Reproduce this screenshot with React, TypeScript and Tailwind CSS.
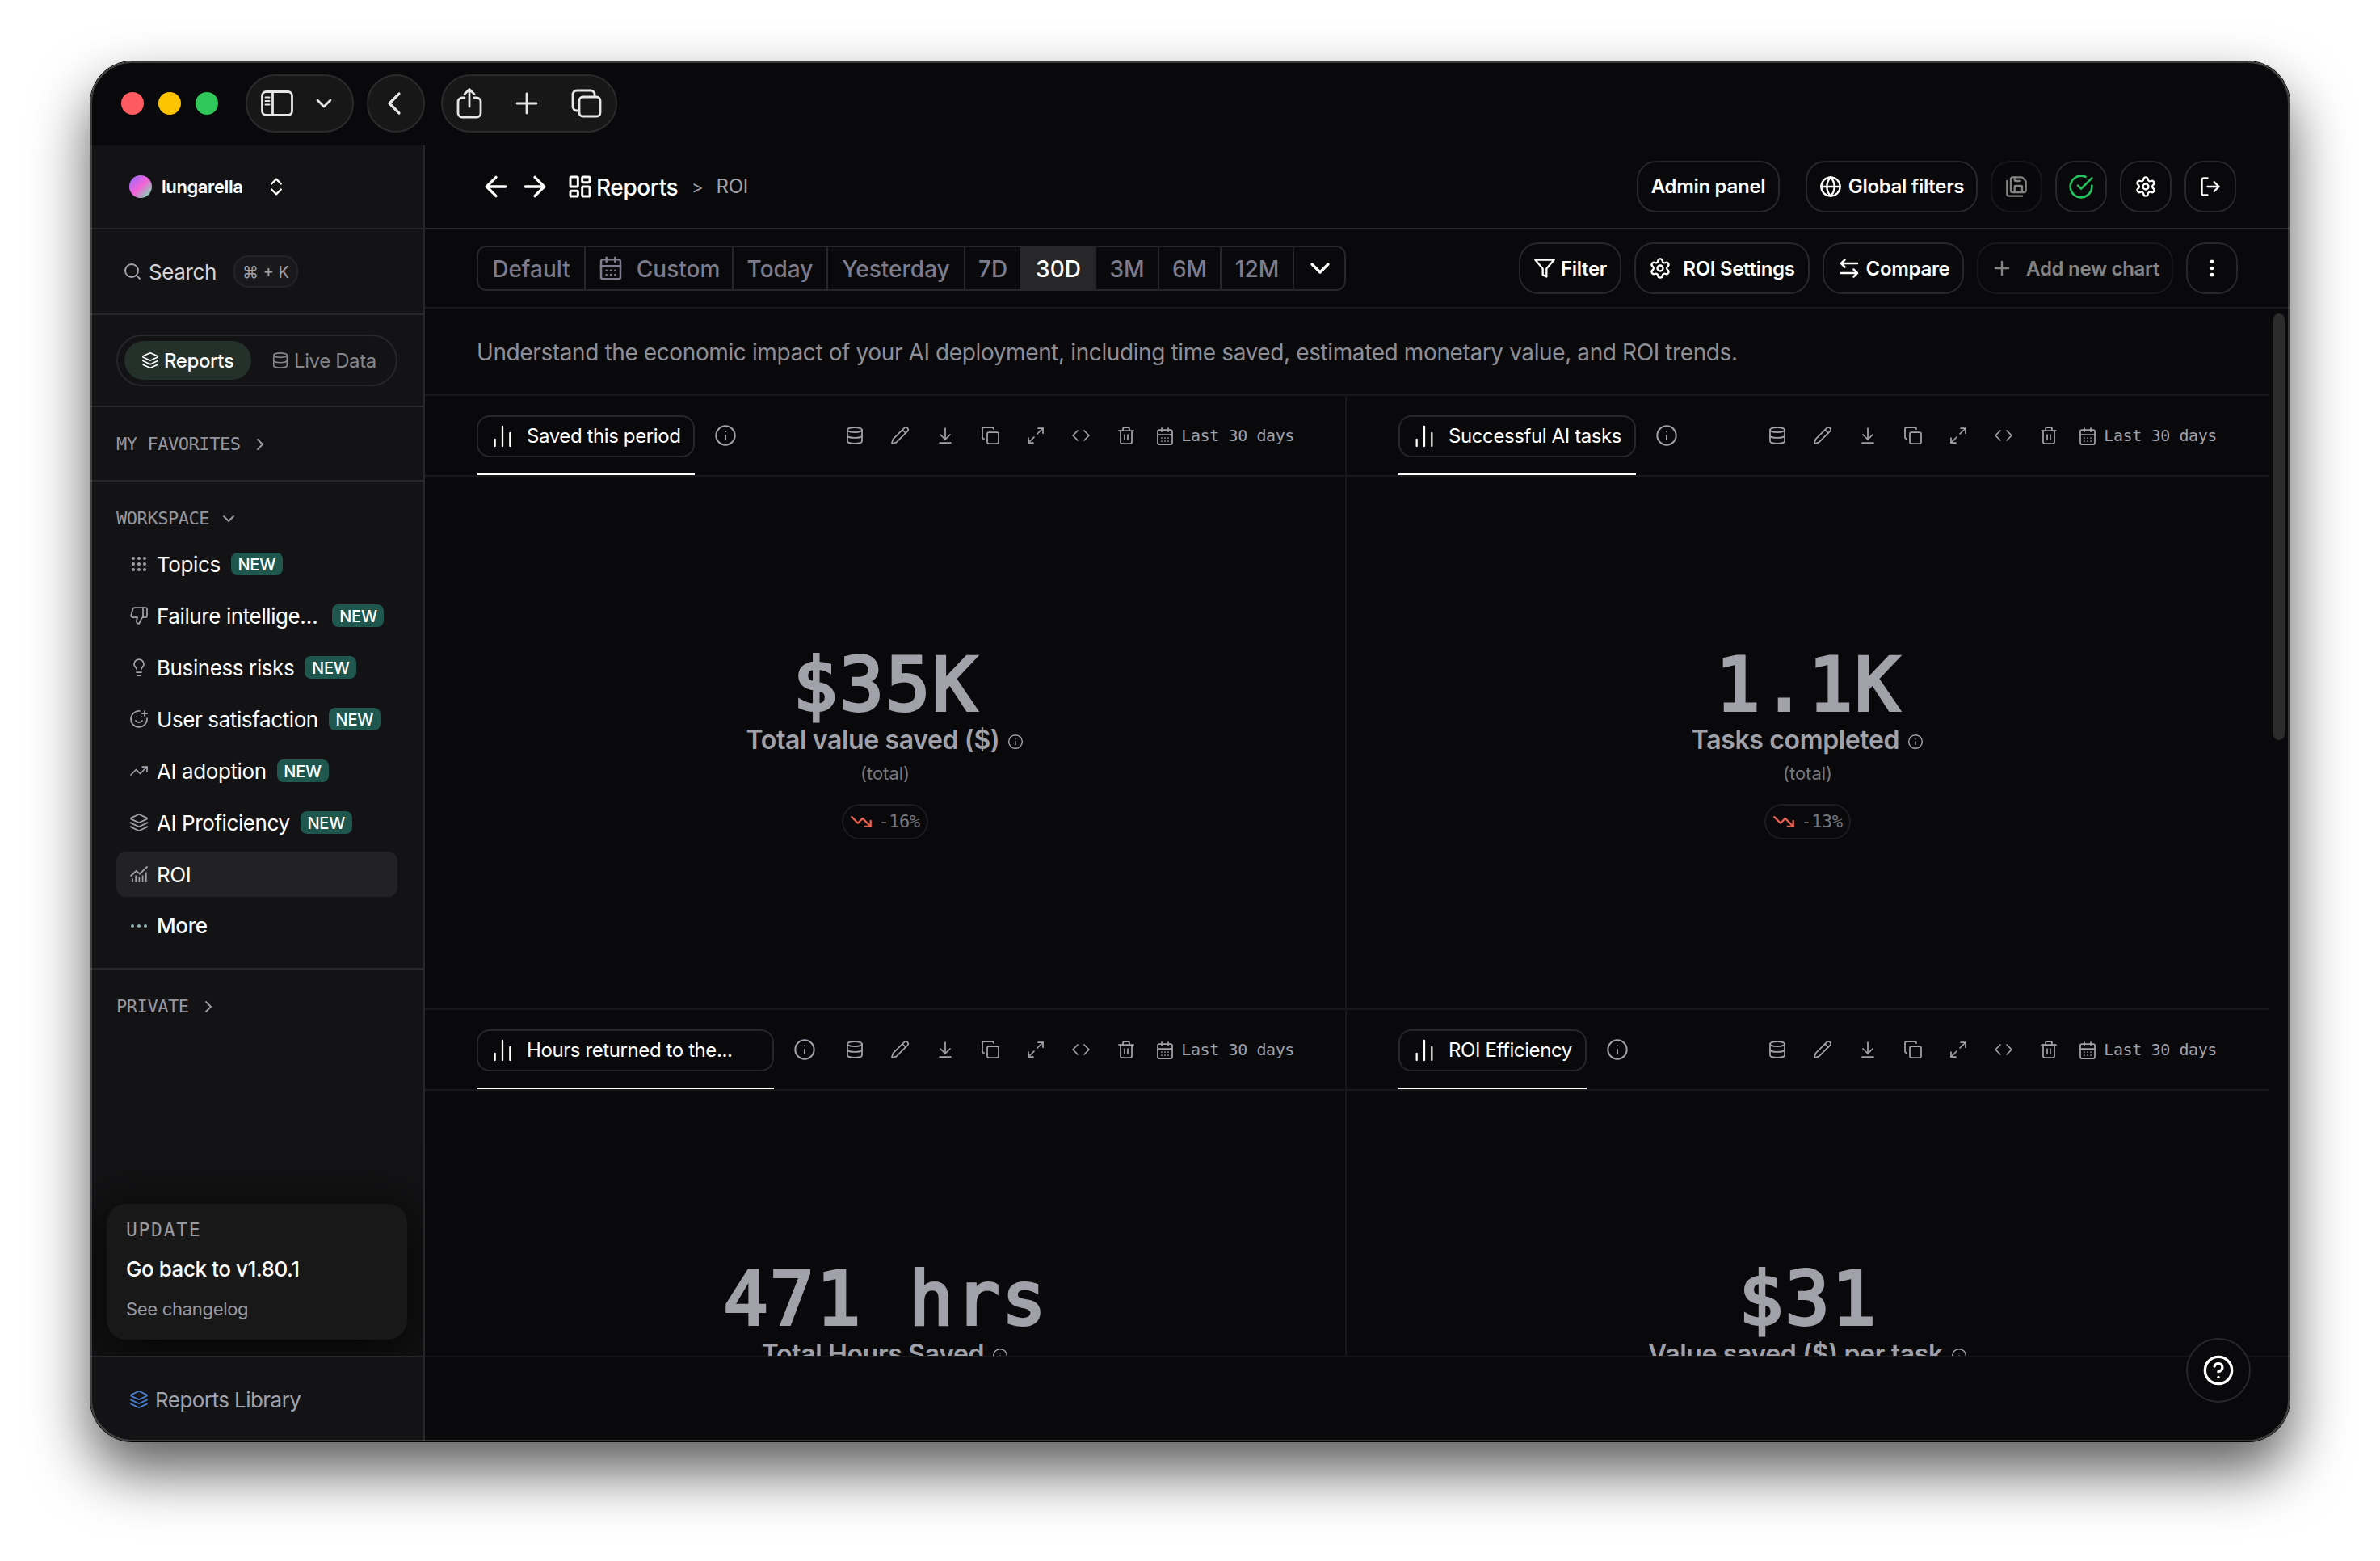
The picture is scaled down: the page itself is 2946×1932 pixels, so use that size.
import type { ReactNode } from "react"
import {
  ArrowDownToLine,
  ArrowLeft,
  ArrowRight,
  CalendarDays,
  ChartNoAxesColumn,
  ChevronDown,
  ChevronRight,
  ChevronsUpDown,
  CircleHelp,
  Code,
  Copy,
  Database,
  EllipsisVertical,
  Globe,
  Grip,
  Info,
  Layers,
  LayoutDashboard,
  Lightbulb,
  LogOut,
  Maximize2,
  Pencil,
  Plus,
  SaveAll,
  Search,
  Settings,
  SmilePlus,
  ThumbsDown,
  Trash2,
  TrendingDown,
  TrendingUp,
} from "lucide-react"

const navItems = [
  { label: "Topics", icon: <Grip size={24} strokeWidth={2} />, isNew: true },
  { label: "Failure intellige…", icon: <ThumbsDown size={24} strokeWidth={1.75} />, isNew: true, wide: true },
  { label: "Business risks", icon: <Lightbulb size={24} strokeWidth={1.75} />, isNew: true },
  { label: "User satisfaction", icon: <SmilePlus size={24} strokeWidth={1.75} />, isNew: true },
  { label: "AI adoption", icon: <TrendingUp size={24} strokeWidth={1.75} />, isNew: true },
  { label: "AI Proficiency", icon: <Layers size={24} strokeWidth={1.75} />, isNew: true },
  { label: "ROI", icon: <TrendBars />, active: true },
]

const ranges = [
  { label: "Default", width: "w-[133px]" },
  { label: "Custom", width: "w-[183px]", calendar: true },
  { label: "Today", width: "w-[117px]" },
  { label: "Yesterday", width: "w-[170px]" },
  { label: "7D", width: "w-[70px]" },
  { label: "30D", width: "w-[92px]", active: true },
  { label: "3M", width: "w-[78px]" },
  { label: "6M", width: "w-[77px]" },
  { label: "12M", width: "w-[90px]" },
]

const charts = [
  { title: "Saved this period", width: "w-[270px]", value: "$35K", label: "Total value saved ($)", change: "-16%" },
  { title: "Successful AI tasks", width: "w-[294px]", value: "1.1K", label: "Tasks completed", change: "-13%" },
  { title: "Hours returned to the...", width: "w-[368px]", value: "471 hrs", label: "Total Hours Saved" },
  { title: "ROI Efficiency", width: "w-[233px]", value: "$31", label: "Value saved ($) per task" },
]

function TrendBars() {
  return (
    <svg width="24" height="24" viewBox="0 0 24 24" fill="none" stroke="currentColor" strokeWidth="1.75">
      <path d="M1.5 14.5 8.5 8l4.5 3.5L22.500 2.500" />
      <path d="M4 22v-4.500M8.200 22v-8.500M12.400 22v-6.500M16.600 22v-8.500M20.800 22V9.500" />
    </svg>
  )
}

function CompareIcon() {
  return (
    <svg
      width="28"
      height="28"
      viewBox="0 0 28 28"
      fill="none"
      stroke="currentColor"
      strokeWidth="2.5"
      strokeLinecap="round"
      strokeLinejoin="round"
    >
      <path d="M25 8H5M9.500 3.500 5 8l4.500 4.500" />
      <path d="M5 20h20M20.500 15.500 25 20l-4.500 4.500" />
    </svg>
  )
}

function CheckCircle() {
  return (
    <svg
      width="32"
      height="32"
      viewBox="0 0 24 24"
      fill="none"
      stroke="currentColor"
      strokeWidth="2"
      strokeLinecap="round"
      strokeLinejoin="round"
    >
      <path d="M22 11.080V12a10 10 0 1 1-5.930-9.140" />
      <path d="m9 11 3 3L22 4" />
    </svg>
  )
}

function FunnelIcon() {
  return (
    <svg
      width="28"
      height="28"
      viewBox="0 0 24 24"
      fill="none"
      stroke="currentColor"
      strokeWidth="2"
      strokeLinejoin="round"
    >
      <path d="M22 3H2l8 9.460V19l4 2v-8.540z" />
    </svg>
  )
}

function TitleBar() {
  return (
    <div className="flex h-[104px] shrink-0 items-center pl-[38px] text-[#e6e6e6]">
      <div className="flex gap-[18px]">
        <div className="size-7 rounded-full bg-[#ff5a5f]" />
        <div className="size-7 rounded-full bg-[#fdc500]" />
        <div className="size-7 rounded-full bg-[#30c85a]" />
      </div>
      <div className="ml-[34px] flex h-[72px] w-[134px] items-center rounded-full border-2 border-[#2b2b2d] bg-[#171717] pl-[17px]">
        <svg width="40" height="32" viewBox="0 0 40 32" fill="none" stroke="currentColor" strokeWidth="2.8">
          <rect x="1.500" y="1.500" width="37" height="29" rx="5" />
          <path d="M14.500 1.500v29" />
          <path d="M5.500 8.500h5M5.500 13h5M5.500 17.500h5" strokeWidth="2" strokeLinecap="round" />
        </svg>
        <svg
          className="ml-[27px]"
          width="22"
          height="14"
          viewBox="0 0 22 14"
          fill="none"
          stroke="currentColor"
          strokeWidth="2.8"
          strokeLinecap="round"
          strokeLinejoin="round"
        >
          <path d="m3 3 8 8 8-8" />
        </svg>
      </div>
      <div className="ml-4 flex size-[72px] items-center justify-center rounded-full border-2 border-[#2b2b2d] bg-[#171717]">
        <svg
          className="mr-1"
          width="20"
          height="32"
          viewBox="0 0 20 32"
          fill="none"
          stroke="currentColor"
          strokeWidth="3.2"
          strokeLinecap="round"
          strokeLinejoin="round"
        >
          <path d="M16 4 4 16l12 12" />
        </svg>
      </div>
      <div className="ml-[20px] flex h-[72px] w-[218px] items-center rounded-full border-2 border-[#2b2b2d] bg-[#171717] pl-[17px]">
        <svg
          className="mb-[3px]"
          width="32"
          height="40"
          viewBox="0 0 32 40"
          fill="none"
          stroke="currentColor"
          strokeWidth="2.8"
          strokeLinecap="round"
          strokeLinejoin="round"
        >
          <path d="M10 14H7a5 5 0 0 0-5 5v14a5 5 0 0 0 5 5h18a5 5 0 0 0 5-5V19a5 5 0 0 0-5-5h-3" />
          <path d="M16 25V4M10 9.500 16 3.500l6 6" />
        </svg>
        <svg
          className="ml-[41px]"
          width="28"
          height="28"
          viewBox="0 0 28 28"
          stroke="currentColor"
          strokeWidth="2.8"
          strokeLinecap="round"
        >
          <path d="M14 2v24M2 14h24" />
        </svg>
        <svg
          className="ml-[41px]"
          width="38"
          height="36"
          viewBox="0 0 38 36"
          fill="none"
          stroke="currentColor"
          strokeWidth="2.800"
        >
          <rect x="10" y="10" width="26" height="24" rx="4.500" />
          <path d="M9 27H7a5 5 0 0 1-5-5V7a5 5 0 0 1 5-5h17a5 5 0 0 1 5 5v2" />
        </svg>
      </div>
    </div>
  )
}

function SectionTitle({ children, open }: { children: ReactNode; open?: boolean }) {
  return (
    <div className="flex items-center gap-3 font-['DejaVu_Sans_Mono',monospace] text-[22px] leading-none tracking-[-0.45px] text-[#96969e]">
      <span className="pt-px">{children}</span>
      {open ? (
        <ChevronDown className="mt-[2px]" size={24} strokeWidth={2} />
      ) : (
        <ChevronRight className="mt-[2px]" size={24} strokeWidth={2} />
      )}
    </div>
  )
}

function Sidebar() {
  return (
    <aside className="flex w-[414px] shrink-0 flex-col border-r-2 border-[#27272a] bg-[#131315]">
      <div className="flex h-[104px] shrink-0 items-center border-b-2 border-[#27272a] pl-12 text-white">
        <div className="size-7 rounded-full bg-[linear-gradient(135deg,#a06bf5_10%,#f562d8_50%,#8ec9b5_85%)]" />
        <span className="ml-3 w-[100px] text-[22px] leading-none font-semibold tracking-[-0.4px]">lungarella</span>
        <ChevronsUpDown className="ml-7" size={28} strokeWidth={2} />
      </div>
      <div className="flex h-[106px] shrink-0 items-center border-b-2 border-[#27272a] pl-10">
        <Search className="text-[#a1a1aa]" size={24} strokeWidth={2} />
        <span className="ml-2 w-[86px] pt-[2px] text-[26px] leading-none tracking-[-0.4px] text-[#d4d4d8]">Search</span>
        <span className="ml-[19px] flex h-10 w-20 items-center justify-center rounded-[18px] border-2 border-[#242427] bg-[#19191b] pt-[2px] text-[20px] leading-none text-[#a1a1aa]">
          ⌘ + K
        </span>
      </div>
      <div className="flex h-[114px] shrink-0 items-center border-b-2 border-[#27272a] pl-8">
        <div className="flex h-16 w-[348px] items-center rounded-full border-2 border-[#27272a] pl-2 text-[24px] leading-none tracking-[-0.4px]">
          <div className="flex h-12 w-[157px] items-center gap-[6px] rounded-full bg-[#24312b] pl-[21px] font-medium text-white">
            <Layers size={22} strokeWidth={1.75} />
            <span className="pt-px">Reports</span>
          </div>
          <div className="ml-[25px] flex items-center gap-[6px] text-[#85858c]">
            <Database size={22} strokeWidth={1.75} />
            <span className="pt-px">Live Data</span>
          </div>
        </div>
      </div>
      <div className="flex h-[92px] shrink-0 items-center border-b-2 border-[#27272a] pl-8">
        <SectionTitle>MY FAVORITES</SectionTitle>
      </div>
      <div className="h-[604px] shrink-0 border-b-2 border-[#27272a] pt-[32px] pr-8 pl-8">
        <SectionTitle open>WORKSPACE</SectionTitle>
        <div className="mt-4 flex flex-col gap-2 text-[26px] leading-none tracking-[-0.4px] text-white">
          {navItems.map((item) => (
            <div
              key={item.label}
              className={`flex h-14 items-center rounded-[12px] pl-4 ${item.active ? "bg-[#222224]" : ""}`}
            >
              <span className="text-[#a1a1aa]">{item.icon}</span>
              <span className="ml-[10px] pt-px whitespace-nowrap">{item.label}</span>
              {item.isNew && (
                <span
                  className={`flex h-7 w-16 items-center justify-center rounded-[8px] bg-[#1f574f] pt-px text-[20px] font-medium tracking-[-0.2px] ${item.wide ? "ml-[18px]" : "ml-[13px]"}`}
                >
                  NEW
                </span>
              )}
            </div>
          ))}
          <div className="flex h-14 items-center pl-4 font-medium">
            <span className="flex w-6 justify-center gap-1">
              <i className="size-1 rounded-full bg-[#8fb3b3]" />
              <i className="size-1 rounded-full bg-[#8fb3b3]" />
              <i className="size-1 rounded-full bg-[#8fb3b3]" />
            </span>
            <span className="ml-[10px]">More</span>
          </div>
        </div>
      </div>
      <div className="relative flex flex-1 flex-col justify-between overflow-hidden pt-8">
        <div className="pl-8">
          <SectionTitle>PRIVATE</SectionTitle>
        </div>
        <div className="mb-5 ml-5 h-[168px] w-[372px] rounded-[24px] bg-[#181819] pl-[24px] text-[#9a9aa2] shadow-[0_16px_64px_16px_rgba(0,0,0,0.6)]">
          <div className="pt-5 font-['DejaVu_Sans_Mono',monospace] text-[23px] leading-[24px] tracking-[1.7px]">UPDATE</div>
          <div className="mt-[21px] text-[26px] leading-[32px] font-medium tracking-[-0.45px] text-white">
            Go back to v1.80.1
          </div>
          <div className="mt-[19px] text-[22px] leading-[28px] tracking-[-0.3px]">See changelog</div>
        </div>
      </div>
      <div className="flex h-[106px] shrink-0 items-center border-t-2 border-[#27272a] pl-12 text-[26px] leading-none tracking-[-0.55px] text-[#a1a1aa]">
        <Layers className="text-[#4a7fd0]" size={24} strokeWidth={1.75} />
        <span className="ml-2 pt-[2px]">Reports Library</span>
      </div>
    </aside>
  )
}

function Button({ children, className = "" }: { children: ReactNode; className?: string }) {
  return (
    <button
      className={`flex h-16 shrink-0 items-center justify-center rounded-[24px] border-2 border-[#27272a] text-[24px] leading-none font-semibold tracking-[-0.3px] whitespace-nowrap ${className}`}
    >
      {children}
    </button>
  )
}

function Header() {
  return (
    <header className="flex h-[104px] shrink-0 items-center border-b-2 border-[#27272a] pr-[66px] pl-[68px] text-white">
      <ArrowLeft size={40} />
      <ArrowRight className="ml-2" size={40} />
      <LayoutDashboard className="ml-5" size={32} strokeWidth={2.2} />
      <span className="ml-1 w-[102px] pt-px text-[28px] leading-none font-medium tracking-[-0.4px]">Reports</span>
      <span className="ml-4 text-[22px] leading-none text-[#a1a1aa]">&gt;</span>
      <span className="ml-[16px] text-[24px] leading-none tracking-[-0.3px] text-[#a1a1aa]">ROI</span>
      <div className="ml-auto flex gap-4">
        <Button className="mr-4 w-[177px]">Admin panel</Button>
        <Button className="w-[213px] gap-2">
          <Globe size={28} strokeWidth={2} />
          Global filters
        </Button>
        <Button className="w-16 opacity-50">
          <SaveAll size={28} strokeWidth={2} />
        </Button>
        <Button className="w-16 text-[#22c55e]">
          <CheckCircle />
        </Button>
        <Button className="w-16">
          <Settings size={28} strokeWidth={2} />
        </Button>
        <Button className="w-16">
          <LogOut size={28} strokeWidth={2} />
        </Button>
      </div>
    </header>
  )
}

function Toolbar() {
  return (
    <div className="flex h-[98px] shrink-0 items-center border-b-2 border-[#18181b] pr-16 pl-16 text-white">
      <div className="flex h-14 overflow-hidden rounded-[12px] border-2 border-[#27272a] text-[28px] leading-none font-medium text-[#7c7c8c]">
        {ranges.map((range) => (
          <div
            key={range.label}
            className={`flex shrink-0 items-center justify-center border-r-2 border-[#27272a] ${range.width} ${range.active ? "bg-[#27272a] text-white" : ""}`}
          >
            {range.calendar && <CalendarDays className="mr-4" size={32} strokeWidth={1.9} />}
            <span className="pt-px">{range.label}</span>
          </div>
        ))}
        <div className="flex w-[62px] items-center justify-center pl-[2px] text-white">
          <ChevronDown size={40} strokeWidth={2} />
        </div>
      </div>
      <div className="ml-auto flex gap-4">
        <Button className="w-[127px] gap-[6px]">
          <FunnelIcon />
          <span className="pt-px">Filter</span>
        </Button>
        <Button className="w-[217px] gap-[14px]">
          <Settings size={28} strokeWidth={2} />
          <span className="pt-px">ROI Settings</span>
        </Button>
        <Button className="w-[175px] gap-2">
          <CompareIcon />
          <span className="pt-px">Compare</span>
        </Button>
        <Button className="w-[243px] gap-4 opacity-50">
          <Plus size={28} strokeWidth={2} />
          <span className="pt-px">Add new chart</span>
        </Button>
        <Button className="w-16">
          <EllipsisVertical size={28} strokeWidth={2} />
        </Button>
      </div>
    </div>
  )
}

function ChartCard({ chart, left }: { chart: (typeof charts)[number]; left: boolean }) {
  return (
    <div className={`h-[760px] border-b-2 border-[#18181b] ${left ? "border-r-2" : ""}`}>
      <div className="flex h-[100px] items-start border-b-2 border-[#18181b] pl-16 text-[#a1a1aa]">
        <div className={`h-[98px] shrink-0 border-b-2 border-white pt-6 ${chart.width}`}>
          <div className="flex h-[52px] items-center rounded-[16px] border-2 border-[#27272a] pl-[14px] text-white">
            <ChartNoAxesColumn size={32} strokeWidth={1.7} />
            <span className="ml-[14px] text-[24px] leading-none tracking-[-0.4px] whitespace-nowrap">
              {chart.title}
            </span>
          </div>
        </div>
        <div className="flex h-[98px] flex-1 items-center">
          <Info className="ml-6" size={28} strokeWidth={1.75} />
          <div className={`ml-auto flex items-center pb-px ${left ? "mr-[63px]" : "mr-[64px]"}`}>
            <div className="flex items-center gap-8">
              <Database size={24} strokeWidth={1.75} />
              <Pencil size={24} strokeWidth={1.75} />
              <ArrowDownToLine size={24} strokeWidth={1.75} />
              <Copy size={24} strokeWidth={1.75} />
              <Maximize2 size={24} strokeWidth={1.75} />
              <Code size={24} strokeWidth={1.75} />
              <Trash2 size={24} strokeWidth={1.75} />
            </div>
            <CalendarDays className="mt-[2px] ml-6" size={24} strokeWidth={1.75} />
            <span className="ml-2 font-['DejaVu_Sans_Mono',monospace] text-[20px] leading-none tracking-[-0.4px] whitespace-nowrap">
              Last 30 days
            </span>
          </div>
        </div>
      </div>
      <div className="flex flex-col items-center pt-[210px] text-[#a1a1aa]">
        <div className="pl-[2px] font-['DejaVu_Sans_Mono',monospace] text-[91px] leading-[96px] font-normal tracking-[2.6px] whitespace-pre [-webkit-text-stroke:4px_#a1a1aa]">
          {chart.value}
        </div>
        <div className="mt-[2px] flex items-center gap-[10px]">
          <span className="text-[32px] leading-[36px] font-semibold tracking-[-0.36px]">{chart.label}</span>
          <Info className="mt-1" size={20} strokeWidth={1.75} />
        </div>
        {chart.change && (
          <>
            <div className="mt-[9px] text-[22px] leading-[28px] text-[#77777e]">(total)</div>
            <div className="mt-6 flex h-11 w-[107px] items-center justify-center gap-[7px] rounded-full border-2 border-[#1c1c1f]">
              <TrendingDown className="text-[#e8604f]" size={28} strokeWidth={2} />
              <span className="font-['DejaVu_Sans_Mono',monospace] text-[22px] leading-none tracking-[-0.4px] text-[#77777e]">
                {chart.change}
              </span>
            </div>
          </>
        )}
      </div>
    </div>
  )
}

export default function App() {
  return (
    <div className="h-[1932px] w-[2946px] overflow-hidden bg-white px-[112px] pt-[76px] font-['Inter',sans-serif]">
      <div className="relative h-[1708px] w-[2722px] rounded-[52px] shadow-[0_0_0_1px_#000,0_36px_72px_rgba(0,0,0,0.65)]">
        <div className="flex h-full flex-col overflow-hidden rounded-[52px] bg-[#09090b]">
          <TitleBar />
          <div className="flex min-h-0 flex-1">
            <Sidebar />
            <main className="flex min-w-0 flex-1 flex-col">
              <Header />
              <Toolbar />
              <div className="flex h-[1298px] shrink-0 border-b-2 border-[#18181b]">
                <div className="w-[2282px] overflow-hidden">
                  <div className="flex h-[108px] items-center border-b-2 border-[#18181b] pt-[2px] pl-16 text-[28px] leading-none tracking-[-0.39px] text-[#8e8e96]">
                    Understand the economic impact of your AI deployment, including time saved, estimated monetary
                    value, and ROI trends.
                  </div>
                  <div className="grid grid-cols-2">
                    {charts.map((chart, index) => (
                      <ChartCard key={chart.title} chart={chart} left={index % 2 === 0} />
                    ))}
                  </div>
                </div>
                <div className="pt-[6px] pl-[6px]">
                  <div className="h-[528px] w-[14px] rounded-full bg-[#2c2c2d]" />
                </div>
              </div>
            </main>
          </div>
        </div>

        {/* Window edge highlight */}
        <div className="pointer-events-none absolute inset-0 rounded-[52px] border-2 border-white/20" />

        {/* Help button */}
        <button className="absolute right-12 bottom-12 flex size-20 items-center justify-center rounded-full border-2 border-[#27272a] bg-[#09090b] text-white">
          <CircleHelp size={40} strokeWidth={2} />
        </button>
      </div>
    </div>
  )
}
